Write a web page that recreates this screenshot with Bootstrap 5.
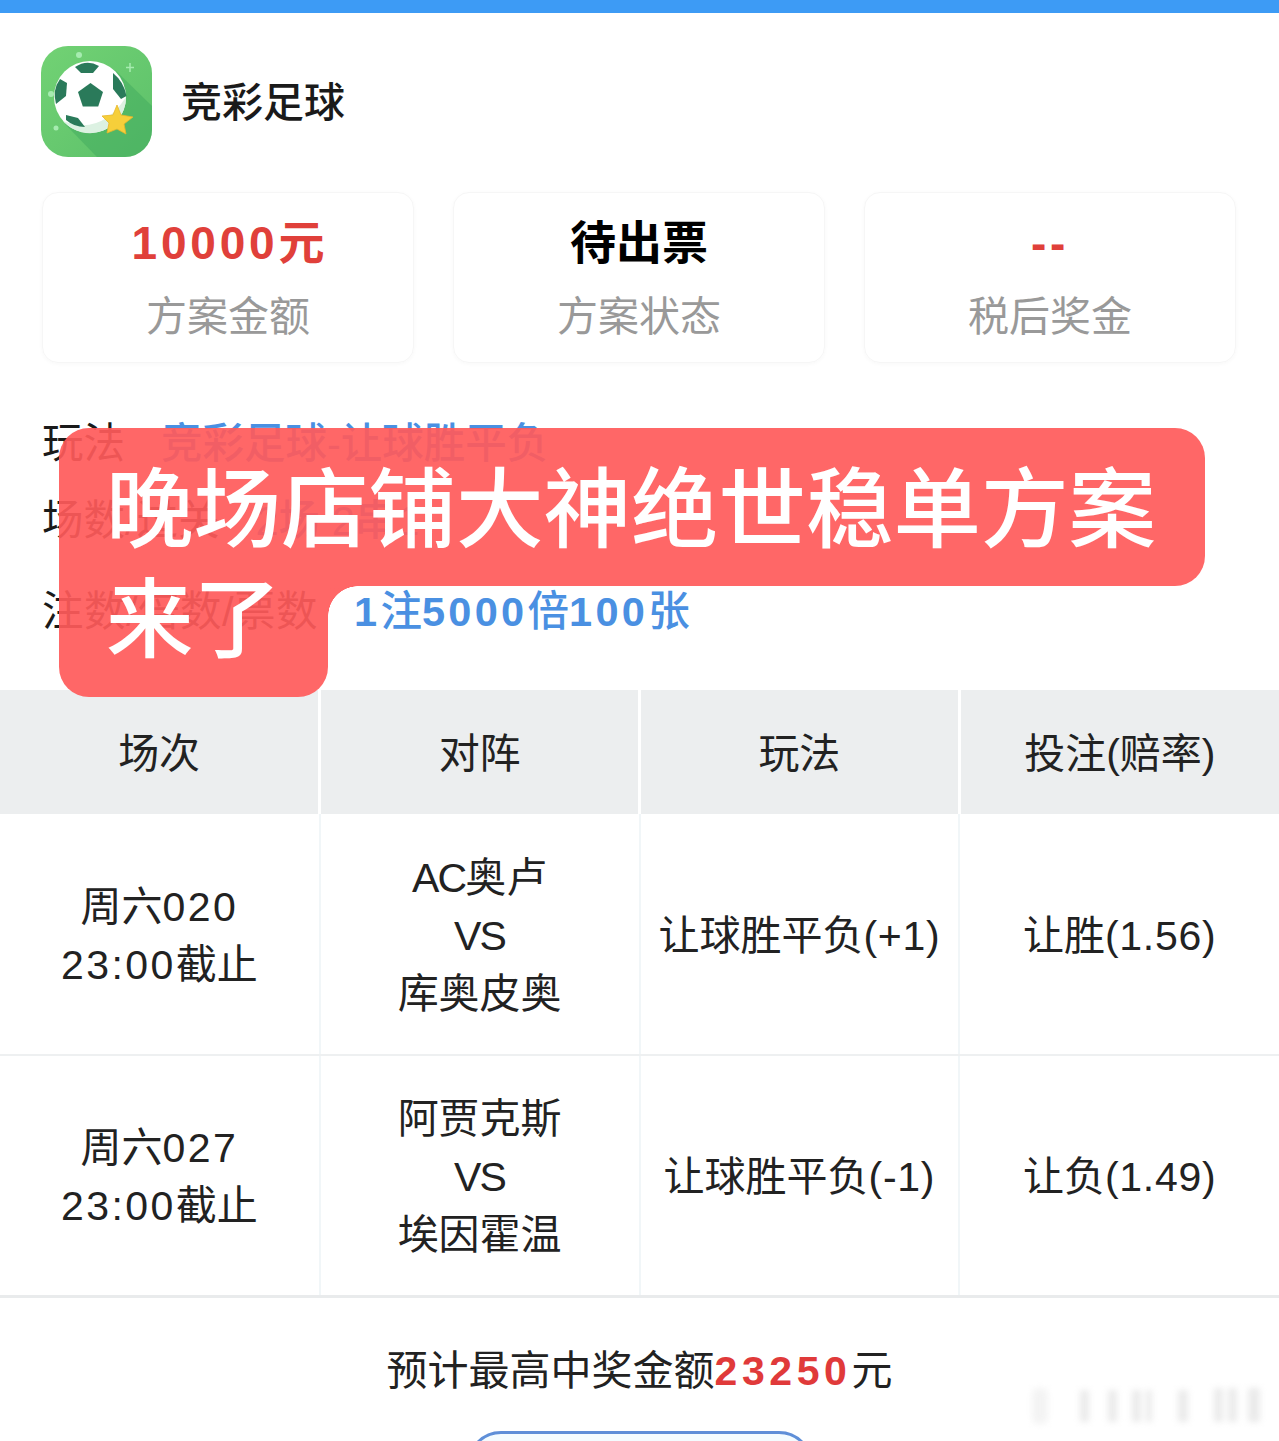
<!DOCTYPE html>
<html lang="zh-CN">
<head>
  <meta charset="UTF-8" />
  <meta name="viewport" content="width=device-width, initial-scale=1" />
  <title>竞彩足球</title>
  <link rel="stylesheet" href="https://cdn.jsdelivr.net/npm/bootstrap@5.3.0/dist/css/bootstrap.min.css" />
  <style>
    /* page frame */
    html, body { margin: 0; background: #fff; overflow: hidden; }
    .shot {
      position: relative;
      height: 1441px;
      overflow: hidden;
      font-family: "Liberation Sans", "Noto Sans CJK SC", sans-serif;
      color: #222;
    }
    .top-bar { height: 13px; background: #3d9bf5; }

    /* app header */
    .app-head { padding: 33px 41px 0; gap: 29px; }
    .app-icon { width: 111px; height: 111px; flex: none; display: block; }
    .app-name { font-size: 41px; font-weight: 500; color: #1a1a1a; padding-top: 4px; }

    /* three summary cards */
    .stat-row { padding: 35px 43px 0 42px; display: grid; grid-template-columns: repeat(3, 1fr); gap: 39px; }
    .stat-box {
      height: 171px;
      border: 1px solid #f6f6f6;
      border-radius: 16px;
      box-shadow: 0 1px 4px rgba(0,0,0,.03);
      text-align: center;
    }
    .stat-val { font-size: 46px; line-height: 60px; font-weight: 700; margin-top: 20px; color: #000; }
    .stat-val.is-red { color: #e0403a; }
    .stat-val .wide { letter-spacing: 3.8px; }
    .stat-lab { font-size: 41px; line-height: 54px; color: #999; margin-top: 17px; }

    /* info lines */
    .info-list { padding: 0 42px; }
    .info-line { display: flex; gap: 36px; font-size: 41.5px; line-height: 58px; white-space: nowrap; color: #1a1a1a; }
    .info-line.l1 { margin-top: 52px; }
    .info-line.l2 { margin-top: 19px; }
    .info-line.l3 { margin-top: 33px; }
    .lab-wide { letter-spacing: .5px; }
    .info-val { color: #4a90e2; font-weight: 500; }
    .info-val .wide { letter-spacing: 3.3px; font-weight: 700; }

    /* bet table */
    .bet-table { width: 100%; table-layout: fixed; margin: 0; margin-top: 49px; font-size: 41px; }
    .bet-table th, .bet-table td {
      text-align: center;
      vertical-align: middle;
      padding: 3px 0 0;
      font-weight: 400;
      line-height: 58px;
      color: #222;
    }
    .bet-table th { height: 124px; background: #eceeef; border-bottom: 0; border-right: 3px solid #fff; }
    .bet-table th:last-child { border-right: 0; }
    .bet-table td { height: 241px; border-bottom: 2px solid #eef0f1; border-right: 2px solid #f1f6f8; background: #fff; }
    .bet-table td:last-child { border-right: 0; }
    .bet-table tr:last-child td { border-bottom: 3px solid #e9ebec; }
    .num-wide { letter-spacing: 2.4px; }
    .num-mid { letter-spacing: .7px; }
    .num-tight { letter-spacing: -1.8px; }

    /* prize line and the button under it */
    .prize-line { font-size: 41px; line-height: 58px; text-align: center; margin-top: 44px; color: #222; }
    .prize-num { color: #e03a3a; font-weight: 700; letter-spacing: 4.6px; }
    .more-btn {
      display: block;
      width: 346px;
      height: 70px;
      margin: 31px auto 0;
      padding: 0;
      border: 3px solid #5f8fd8;
      border-radius: 34px;
      background: #f4fcff;
    }

    /* promo banner lies over the info lines */
    .promo { position: absolute; left: 59px; top: 428px; color: #fff; font-size: 87.5px; font-weight: 500; line-height: 112px; }
    .promo-a, .promo-b { background: rgba(255, 90, 90, .92); padding-left: 47px; white-space: nowrap; }
    .promo-a { width: 1146px; height: 158px; padding-top: 27px; border-radius: 30px 30px 30px 0; }
    .promo-b { position: relative; width: 269px; height: 111px; border-radius: 0 0 30px 30px; line-height: 70px; }
    .promo-b::after {
      content: "";
      position: absolute;
      left: 269px;
      top: 0;
      width: 30px;
      height: 30px;
      background: radial-gradient(circle at 100% 100%, transparent 29.5px, rgba(255, 90, 90, .92) 30px);
    }
    .mark-blur { position: absolute; left: 1028px; top: 1382px; width: 244px; height: 48px; filter: blur(3px); opacity: .42; }
  </style>
</head>
<body>
  <div class="shot">
    <div class="top-bar"></div>

    <!-- App title -->
    <div class="app-head d-flex align-items-center">
      <svg class="app-icon" viewBox="0 0 111 111" role="img" aria-label="足球">
        <defs>
          <linearGradient id="bg" x1="0" y1="0" x2="1" y2="1">
            <stop offset="0" stop-color="#72d274" />
            <stop offset="1" stop-color="#5cc06a" />
          </linearGradient>
          <clipPath id="sq"><rect width="111" height="111" rx="27" /></clipPath>
        </defs>
        <rect width="111" height="111" rx="27" fill="url(#bg)" />
        <!-- long shadow of the ball -->
        <path d="M24 78 L74 24 L111 60 V111 H56 Z" fill="#3fa95e" opacity=".5" clip-path="url(#sq)" />
        <circle cx="49" cy="51" r="36" fill="#fff" />
        <path d="M85 51 A36 36 0 0 1 22 75 Q60 90 85 51 Z" fill="#dcf1e2" />
        <path d="M49.5 37 L62 46 L57.2 60.5 L41.8 60.5 L37 46 Z" fill="#2a7a5a" />
        <path d="M34 21 Q46 13 58 20 L52 27 L40 27 Z" fill="#2a7a5a" />
        <path d="M19 33 L26 37 L25 50 L15 58 Q11 44 19 33 Z" fill="#2a7a5a" />
        <path d="M72 27 Q83 36 85.5 50 L80 53 L72 43 Z" fill="#2a7a5a" />
        <path d="M25 69 L37 72 L44 81 Q33 81 25 74 Z" fill="#2a7a5a" />
        <path d="M76 59 L80 69 L92 71 L83 78 L85 88 L76 83 L66 87 L68 77 L61 70 L72 69 Z" fill="#f6cf3a" stroke="#e8b62a" stroke-width=".8" />
        <circle cx="38" cy="9" r="3" fill="#a6ecb0" />
        <circle cx="10" cy="48" r="3" fill="#a6ecb0" />
        <circle cx="15" cy="82" r="2.5" fill="#a6ecb0" />
        <path d="M89 17 v9 M85 21.5 h8" stroke="#a6ecb0" stroke-width="1.5" />
      </svg>
      <div class="app-name">竞彩足球</div>
    </div>

    <!-- Summary cards -->
    <div class="stat-row">
      <div class="stat-box">
        <div class="stat-val is-red"><span class="wide">10000</span>元</div>
        <div class="stat-lab">方案金额</div>
      </div>
      <div class="stat-box">
        <div class="stat-val">待出票</div>
        <div class="stat-lab">方案状态</div>
      </div>
      <div class="stat-box">
        <div class="stat-val is-red"><span class="wide">--</span></div>
        <div class="stat-lab">税后奖金</div>
      </div>
    </div>

    <!-- Info lines -->
    <div class="info-list">
      <div class="info-line l1"><span>玩法</span><span class="info-val">竞彩足球-让球胜平负</span></div>
      <div class="info-line l2"><span>场数/过关</span><span class="info-val">2场 2串1</span></div>
      <div class="info-line l3"><span class="lab-wide">注数/倍数/票数</span><span class="info-val"><span class="wide">1</span>注<span class="wide">5000</span>倍<span class="wide">100</span>张</span></div>
    </div>

    <!-- Bet table -->
    <table class="table bet-table">
      <thead>
        <tr><th>场次</th><th>对阵</th><th>玩法</th><th>投注(赔率)</th></tr>
      </thead>
      <tbody>
        <tr>
          <td>周六<span class="num-wide">020</span><br><span class="num-wide">23:00</span>截止</td>
          <td><span class="num-tight">AC</span>奥卢<br><span class="num-tight">VS</span><br>库奥皮奥</td>
          <td>让球胜平负<span class="num-mid">(+1)</span></td>
          <td>让胜<span class="num-mid">(1.56)</span></td>
        </tr>
        <tr>
          <td>周六<span class="num-wide">027</span><br><span class="num-wide">23:00</span>截止</td>
          <td>阿贾克斯<br><span class="num-tight">VS</span><br>埃因霍温</td>
          <td>让球胜平负<span class="num-mid">(-1)</span></td>
          <td>让负<span class="num-mid">(1.49)</span></td>
        </tr>
      </tbody>
    </table>

    <!-- Prize -->
    <div class="prize-line">预计最高中奖金额<span class="prize-num">23250</span>元</div>
    <button class="btn more-btn" type="button" aria-label="查看"></button>

    <!-- Promo banner over the info lines -->
    <div class="promo">
      <div class="promo-a">晚场店铺大神绝世稳单方案</div>
      <div class="promo-b">来了</div>
    </div>

    <!-- Faded watermark, bottom right -->
    <svg class="mark-blur" viewBox="0 0 244 48" aria-hidden="true">
      <g fill="#cfcfcf">
        <rect x="4" y="6" width="16" height="36" rx="6" fill="#e4e4e4" />
        <rect x="52" y="8" width="9" height="32" />
        <rect x="80" y="8" width="9" height="32" />
        <rect x="104" y="8" width="9" height="32" />
        <rect x="118" y="8" width="6" height="32" />
        <rect x="150" y="8" width="10" height="32" />
        <rect x="186" y="6" width="9" height="34" />
        <rect x="200" y="6" width="9" height="34" />
        <rect x="220" y="6" width="12" height="34" />
      </g>
    </svg>
  </div>

  <script src="https://cdn.jsdelivr.net/npm/bootstrap@5.3.0/dist/js/bootstrap.bundle.min.js"></script>
</body>
</html>
